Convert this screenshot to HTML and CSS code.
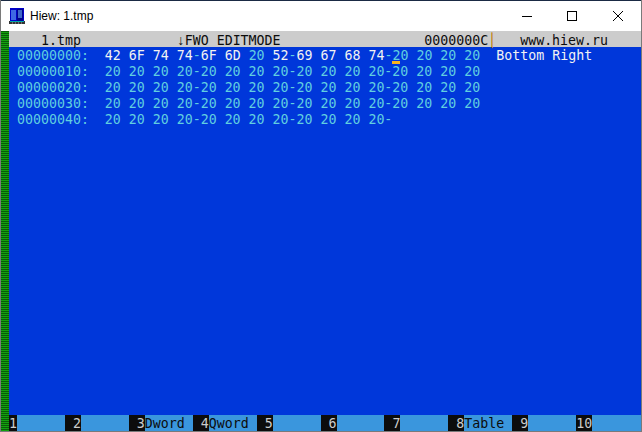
FILE: index.html
```html
<!DOCTYPE html>
<html lang="en">
<head>
<meta charset="utf-8">
<title>Hiew: 1.tmp</title>
<link rel="stylesheet" href="styles.css">
</head>
<body>
<div class="window">
  <header class="titlebar">
    <svg class="app-icon" width="16" height="16" viewBox="0 0 16 16">
      <rect x="1" y="0" width="14" height="13" fill="#0000c8"/>
      <rect x="0" y="13" width="16" height="3" fill="#333"/>
      <rect x="1" y="13" width="14" height="1" fill="#00a8a8"/>
      <rect x="8" y="1" width="6" height="12" fill="#000090"/>
      <path d="M2 3h5M2 5h5M2 7h5M2 9h5M2 11h5M9 3h4M9 5h4M9 7h4M9 9h4" stroke="#7fd0ff" stroke-width="1"/>
      <path d="M3 15h1M6 15h1M9 15h1M12 15h1" stroke="#aaa"/>
    </svg>
    <span class="title">Hiew: 1.tmp</span>
    <div class="controls">
      <svg width="46" height="30" viewBox="0 0 46 30"><path d="M19 15.5h10" stroke="#000"/></svg>
      <svg width="46" height="30" viewBox="0 0 46 30"><rect x="18.5" y="10.5" width="9" height="9" fill="none" stroke="#000"/></svg>
      <svg width="46" height="30" viewBox="0 0 46 30"><path d="M18 10l10 10M28 10l-10 10" stroke="#000"/></svg>
    </div>
  </header>
  <main class="console">
    <div class="strip"></div>
    <div class="screen">
      <div class="row status">    1.tmp            <span class="arrow">↓</span>FWO EDITMODE                  0000000C<span class="sep">│</span>   www.hiew.ru</div>
      <div class="rows">
        <div class="row"> 00000000:  <b>42 6F 74 74</b>-<b>6F 6D</b> 20 <b>52</b>-<b>69 67 68 74</b>-<span class="cursor">20</span> 20 20 20  <b>Bottom Right</b></div>
        <div class="row"> 00000010:  20 20 20 20-20 20 20 20-20 20 20 20-20 20 20 20</div>
        <div class="row"> 00000020:  20 20 20 20-20 20 20 20-20 20 20 20-20 20 20 20</div>
        <div class="row"> 00000030:  20 20 20 20-20 20 20 20-20 20 20 20-20 20 20 20</div>
        <div class="row"> 00000040:  20 20 20 20-20 20 20 20-20 20 20 20-</div>
      </div>
      <div class="row fkeys"><i>1</i><span>      </span><i> 2</i><span>      </span><i> 3</i><span>Dword </span><i> 4</i><span>Qword </span><i> 5</i><span>      </span><i> 6</i><span>      </span><i> 7</i><span>      </span><i> 8</i><span>Table </span><i> 9</i><span>      </span><i>10</i><span>      </span></div>
    </div>
  </main>
</div>
</body>
</html>
```

FILE: styles.css
```css
html, body { margin: 0; padding: 0; background: #fff; }
.window { width: 642px; height: 432px; box-sizing: border-box; display: flex; flex-direction: column; overflow: hidden; border: 1px solid #7a7a7a; border-top: 0; }
.titlebar { height: 31px; flex: none; display: flex; align-items: center; background: #fff; border-top: 1px solid #1a2a44; box-sizing: border-box; margin: 0 -1px; }
.app-icon { margin-left: 9px; margin-right: 5px; flex: none; }
.title { font: 12px "Liberation Sans", Arial, sans-serif; color: #000; }
.controls { margin-left: auto; margin-right: 1px; display: flex; }
.controls svg { display: block; }
.console { flex: 1; display: flex; min-height: 0; background: #0037da; }
.strip { width: 8px; flex: none; background-color: #0a5a08; background-image: repeating-linear-gradient(0deg, #13a10e 0 1px, transparent 1px 2px); }
.screen { flex: 1; min-width: 0; overflow: hidden; display: flex; flex-direction: column; }
.row { height: 16px; line-height: 18px; white-space: pre; font-family: "DejaVu Sans Mono", monospace; font-size: 13.28px; color: #61cfe0; flex: none; }
.row b { font-weight: normal; color: #f2f2f2; }
.status { background: #ccc; color: #0c0c0c; }
.arrow { display: inline-block; width: 8px; text-align: center; font-family: "Liberation Sans", sans-serif; font-size: 14px; }
.sep { color: #c17a00; }
.rows { flex: 1; }
.cursor { position: relative; }
.cursor::after { content: ""; position: absolute; left: 0; width: 8px; bottom: -1px; height: 3px; background: #f9b21c; }
.fkeys { display: flex; background: #3a96dd; }
.fkeys i { font-style: normal; background: #0c0c0c; color: #ccc; white-space: pre; }
.fkeys span { color: #0c0c0c; white-space: pre; }
```
